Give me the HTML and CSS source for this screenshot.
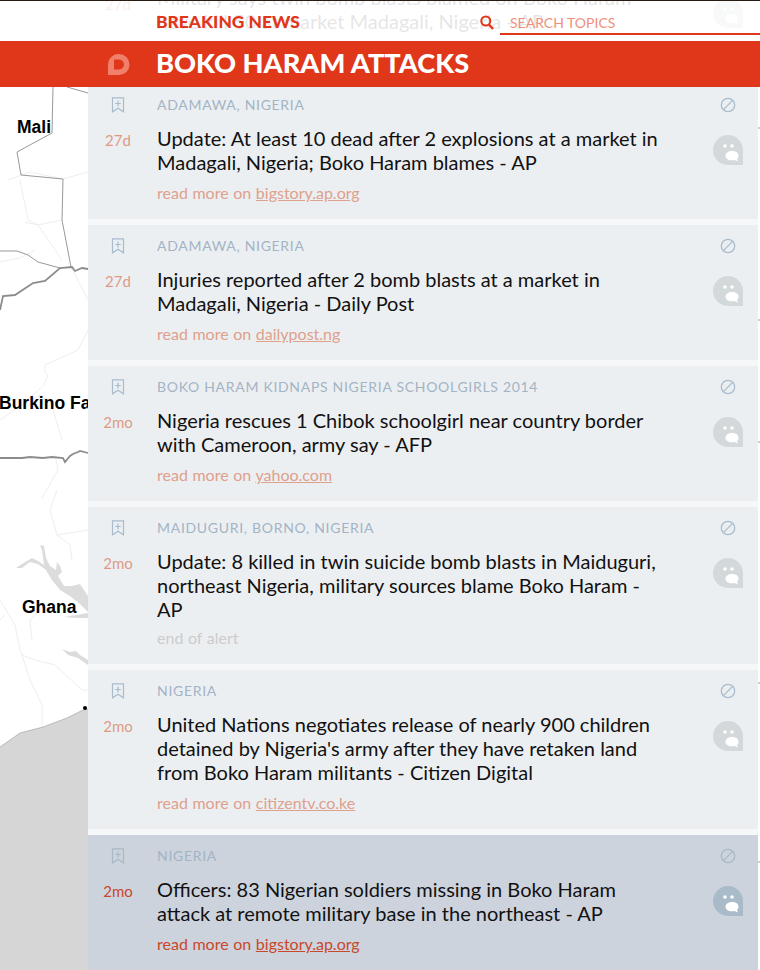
FILE: index.html
```html
<!DOCTYPE html>
<html>

	<head>
		<meta charset="UTF-8">
		<title>Boko Haram Attacks</title>
		<link rel="stylesheet" href="styles.css">
	</head>

	<body>
		<svg width="0" height="0" class="defs">
			<symbol id="i-save" viewBox="0 0 14 16">
				<path d="M1.500 .8h11v14l-5.500-3.600-5.500 3.600z" fill="none" stroke="currentColor" stroke-width="1.200" />
				<path d="M7 3.500v6M4.200 6.500h5.600" fill="none" stroke="currentColor" stroke-width="1.200" />
			</symbol>
			<symbol id="i-ban" viewBox="0 0 16 16">
				<circle cx="8" cy="8" r="6.700" fill="none" stroke="currentColor" stroke-width="1.300" />
				<path d="M3.400 12.600 12.600 3.400" fill="none" stroke="currentColor" stroke-width="1.300" />
			</symbol>
			<symbol id="i-face" viewBox="0 0 30 30">
				<path d="M15 0a15 15 0 0 1 15 15v15h-15a15 15 0 0 1 0-30z" fill="currentColor" />
				<circle cx="12" cy="11" r="1.800" fill="#fff" />
				<circle cx="19" cy="11" r="1.800" fill="#fff" />
				<path d="M19 16c4 0 6.500 2 6.500 4.700 0 1.300-.6 2.300-1.500 3l1 2.800-3.400-1.600c-.8.200-1.700.300-2.600.300-4 0-6.500-2-6.500-4.500s2.500-4.700 6.500-4.700z" fill="#fff" />
			</symbol>
		</svg>

		<!-- map behind the list -->
		<svg class="map" width="760" height="970" viewBox="0 0 760 970">
			<path class="sea" d="M0 747 20 733 43 727 67 718 83 710 88 709V970H0z" />
			<path class="sea-edge" d="M0 747 20 733 43 727 67 718 83 710 88 709" />
			<path class="lake" d="M16 568 22 564 32 558 38 561 44 565 42 550 40 545 44 546 46 558 50 566 56 570 57 562 60 566 62 572 58 576 64 586 72 586 80 584 84 590 88 596V612L80 604 70 596 60 590 52 580 46 570 38 564 30 562 22 568z" />
			<path class="lake" d="M64 617 76 615 88 613V618L76 618zM62 649 70 652 76 651 80 655 88 660V665L78 658 68 655z" />
			<path class="light" d="M8 180 30 172 63 179 88 172M20 180 28 220 38 225 62 260M62 220 38 225 25 222M35 250 20 258 0 262M71 267 88 300M88 330 78 350 45 365 45 372 48 375 44 385 22 405 40 395 50 400 62 440M22 405 0 420M55 455 58 470 42 498M57 490 50 510 57 535 70 545 72 560M57 535 88 530M0 600 15 625 20 650 22 655M32 640 30 620 45 605M22 655 35 660 55 665 82 690 88 690M22 655 30 680 42 705 42 727M0 620 5 615" />
			<path class="border" d="M55 0 35 18 0 37 6 42M53 87 52 133 17 152 21 175 63 179 62 220 71 267M67 87 88 93M0 251 17 251 28 255 38 262 60 268" />
			<path class="border-thick" d="M0 310 3 296 15 295 33 283 45 281 60 268 72 267 75 271 82 268 88 269" />
			<path class="border-thick" d="M0 458 22 458 30 457 43 458 52 457 63 458 65 462 70 456 73 454 78 452 80 451 88 453" />
			<path class="border" d="M756 128h4M756 320h4M756 442h4M756 683h4M756 862h4" />
			<circle cx="85" cy="708" r="2" />
			<text class="map-label" x="17" y="133">Mali</text>
			<text class="map-label" x="-1" y="409">Burkino Faso</text>
			<text class="map-label" x="22" y="613">Ghana</text>
		</svg>

		<div class="page">
			<div class="top">
				<!-- item scrolled away under the header -->
				<div class="peek">
					<span class="peek-time">27d</span>
					<p>Military says twin bomb blasts blamed on Boko Haram<br>have kill 50 at market Madagali, Nigeria - AP</p>
					<svg class="peek-face" width="30" height="30"><use href="#i-face" /></svg>
				</div>
				<div class="top-title">BREAKING NEWS</div>
				<div class="search">
					<svg width="14" height="15" viewBox="0 0 14 15">
						<circle cx="5.800" cy="6" r="4.500" fill="none" stroke="#e0361a" stroke-width="2" />
						<path d="M9 9.500 13 14" fill="none" stroke="#e0361a" stroke-width="2.400" />
					</svg>
					<div class="search-box">SEARCH TOPICS</div>
				</div>
			</div>

			<div class="bar">
				<svg class="logo" width="22" height="21" viewBox="0 0 22 21">
					<path fill-rule="evenodd" d="M11 0a10.500 10.500 0 0 1 0 21H0V10.500A10.500 10.500 0 0 1 11 0zM6 5.500v10h5a5 5 0 0 0 0-10z" />
				</svg>
				<h1>BOKO HARAM ATTACKS</h1>
			</div>

			<ul class="list">
				<li class="item">
					<div class="side">
						<svg class="save" width="14" height="16"><use href="#i-save" /></svg>
						<span class="time">27d</span>
					</div>
					<div class="body">
						<div class="tag">ADAMAWA, NIGERIA</div>
						<div class="title">Update: At least 10 dead after 2 explosions at a market in Madagali, Nigeria; Boko Haram blames - AP</div>
						<div class="more">read more on <a>bigstory.ap.org</a></div>
					</div>
					<div class="acts">
						<svg class="ban" width="16" height="16"><use href="#i-ban" /></svg>
						<svg class="face" width="30" height="30"><use href="#i-face" /></svg>
					</div>
				</li>
				<li class="item">
					<div class="side">
						<svg class="save" width="14" height="16"><use href="#i-save" /></svg>
						<span class="time">27d</span>
					</div>
					<div class="body">
						<div class="tag">ADAMAWA, NIGERIA</div>
						<div class="title">Injuries reported after 2 bomb blasts at a market in Madagali, Nigeria - Daily Post</div>
						<div class="more">read more on <a>dailypost.ng</a></div>
					</div>
					<div class="acts">
						<svg class="ban" width="16" height="16"><use href="#i-ban" /></svg>
						<svg class="face" width="30" height="30"><use href="#i-face" /></svg>
					</div>
				</li>
				<li class="item">
					<div class="side">
						<svg class="save" width="14" height="16"><use href="#i-save" /></svg>
						<span class="time">2mo</span>
					</div>
					<div class="body">
						<div class="tag">BOKO HARAM KIDNAPS NIGERIA SCHOOLGIRLS 2014</div>
						<div class="title">Nigeria rescues 1 Chibok schoolgirl near country border with Cameroon, army say - AFP</div>
						<div class="more">read more on <a>yahoo.com</a></div>
					</div>
					<div class="acts">
						<svg class="ban" width="16" height="16"><use href="#i-ban" /></svg>
						<svg class="face" width="30" height="30"><use href="#i-face" /></svg>
					</div>
				</li>
				<li class="item">
					<div class="side">
						<svg class="save" width="14" height="16"><use href="#i-save" /></svg>
						<span class="time">2mo</span>
					</div>
					<div class="body">
						<div class="tag">MAIDUGURI, BORNO, NIGERIA</div>
						<div class="title">Update: 8 killed in twin suicide bomb blasts in Maiduguri, northeast Nigeria, military sources blame Boko Haram - AP</div>
						<div class="more end">end of alert</div>
					</div>
					<div class="acts">
						<svg class="ban" width="16" height="16"><use href="#i-ban" /></svg>
						<svg class="face" width="30" height="30"><use href="#i-face" /></svg>
					</div>
				</li>
				<li class="item">
					<div class="side">
						<svg class="save" width="14" height="16"><use href="#i-save" /></svg>
						<span class="time">2mo</span>
					</div>
					<div class="body">
						<div class="tag">NIGERIA</div>
						<div class="title">United Nations negotiates release of nearly 900 children detained by Nigeria's army after they have retaken land from Boko Haram militants - Citizen Digital</div>
						<div class="more">read more on <a>citizentv.co.ke</a></div>
					</div>
					<div class="acts">
						<svg class="ban" width="16" height="16"><use href="#i-ban" /></svg>
						<svg class="face" width="30" height="30"><use href="#i-face" /></svg>
					</div>
				</li>
				<li class="item active">
					<div class="side">
						<svg class="save" width="14" height="16"><use href="#i-save" /></svg>
						<span class="time">2mo</span>
					</div>
					<div class="body">
						<div class="tag">NIGERIA</div>
						<div class="title">Officers: 83 Nigerian soldiers missing in Boko Haram attack at remote military base in the northeast - AP</div>
						<div class="more">read more on <a>bigstory.ap.org</a></div>
					</div>
					<div class="acts">
						<svg class="ban" width="16" height="16"><use href="#i-ban" /></svg>
						<svg class="face" width="30" height="30"><use href="#i-face" /></svg>
					</div>
				</li>
			</ul>
		</div>
	</body>

</html>
```

FILE: styles.css
```css
* {
	margin: 0;
	padding: 0;
	box-sizing: border-box;
}

html,
body {
	height: 970px;
	overflow: hidden;
}

body {
	position: relative;
	background: #fff;
	font-family: "Lato", "Liberation Sans", sans-serif;
	color: #111;
}

svg {
	display: block;
}

.defs {
	position: absolute;
}

/* map */
.map {
	position: absolute;
	left: 0;
	top: 0;
	font-family: "Liberation Sans", sans-serif;
}

.sea {
	fill: #d6d6d6;
}

.sea-edge {
	fill: none;
	stroke: #9a9a9a;
	stroke-width: .6;
}

.lake {
	fill: #dcdcdc;
}

.light {
	fill: none;
	stroke: #eee;
	stroke-width: 1;
}

.border {
	fill: none;
	stroke: #999;
	stroke-width: 1;
}

.border-thick {
	fill: none;
	stroke: #8c8c8c;
	stroke-width: 1.800;
}

.map-label {
	font-size: 17.500px;
	font-weight: bold;
	fill: #000;
}

/* header */
.page {
	position: relative;
}

.top {
	position: relative;
	height: 41px;
	background: #fff;
	border-top: 1px solid #2a1a14;
	overflow: hidden;
}

.top-title {
	position: absolute;
	left: 156px;
	top: 11px;
	font-size: 17.400px;
	line-height: 20px;
	font-weight: 900;
	color: #e0361a;
}

.search {
	position: absolute;
	left: 480px;
	right: 0;
	top: 9px;
	display: flex;
	align-items: center;
	gap: 6px;
}

.search-box {
	flex: 1;
	height: 25px;
	padding-left: 10px;
	border-bottom: 2px solid #e0361a;
	font-size: 14px;
	line-height: 25px;
	color: #f0907c;
}

.peek {
	position: absolute;
	left: 88px;
	right: 0;
	top: -16px;
	opacity: .1;
	font-size: 20px;
	line-height: 24px;
}

.peek-time {
	position: absolute;
	left: 17px;
	top: 7px;
	font-size: 15px;
	color: #d0634a;
}

.peek p {
	margin-left: 69px;
}

.peek-face {
	position: absolute;
	left: 625px;
	top: 13px;
	color: #c4c8ca;
}

.bar {
	position: relative;
	display: flex;
	align-items: center;
	height: 46px;
	background: #e0361a;
	z-index: 2;
}

.logo {
	margin-left: 108px;
	fill: #f0806c;
}

.bar h1 {
	margin-left: 26px;
	margin-bottom: 3px;
	font-size: 27.200px;
	font-weight: 900;
	color: #fff;
}

/* list */
.list {
	width: 670px;
	margin-left: 88px;
	margin-top: -3px;
	list-style: none;
	background: #f6f7f9;
}

.item {
	display: flex;
	margin-bottom: 6px;
	padding: 10px 0 0;
	background: #eceff2;
}

.side {
	display: flex;
	flex-direction: column;
	align-items: center;
	width: 60px;
	flex-shrink: 0;
}

.save {
	color: #a8bccd;
	margin-top: 3px;
}

.time {
	margin-top: 17px;
	font-size: 15px;
	line-height: 20px;
	color: #df9a85;
}

.body {
	width: 505px;
	margin-left: 9px;
	flex-shrink: 0;
}

.tag {
	height: 21px;
	padding-top: 1px;
	font-size: 14px;
	line-height: 20px;
	letter-spacing: .7px;
	color: #a3b4c4;
}

.title {
	margin-top: 11px;
	font-size: 20px;
	line-height: 24px;
}

.more {
	margin-top: 8px;
	padding-bottom: 15px;
	font-size: 16px;
	line-height: 22px;
	word-spacing: .5px;
	color: #dfa08c;
}

.more a {
	text-decoration: underline;
}

.more.end {
	margin-top: 6px;
	padding-bottom: 15px;
	color: #ccc;
}

.acts {
	display: flex;
	flex-direction: column;
	align-items: center;
	width: 30px;
	margin-left: 51px;
}

.ban {
	color: #a8bccd;
	margin-top: 3px;
}

.face {
	margin-top: 22px;
	color: #d3d8da;
}

.active {
	background: #cdd3dd;
	margin-bottom: 0;
}

.active .time,
.active .more {
	color: #c8482a;
}

.active .save,
.active .ban {
	color: #a9b8c6;
}

.active .face {
	color: #a9bbc9;
}
```
